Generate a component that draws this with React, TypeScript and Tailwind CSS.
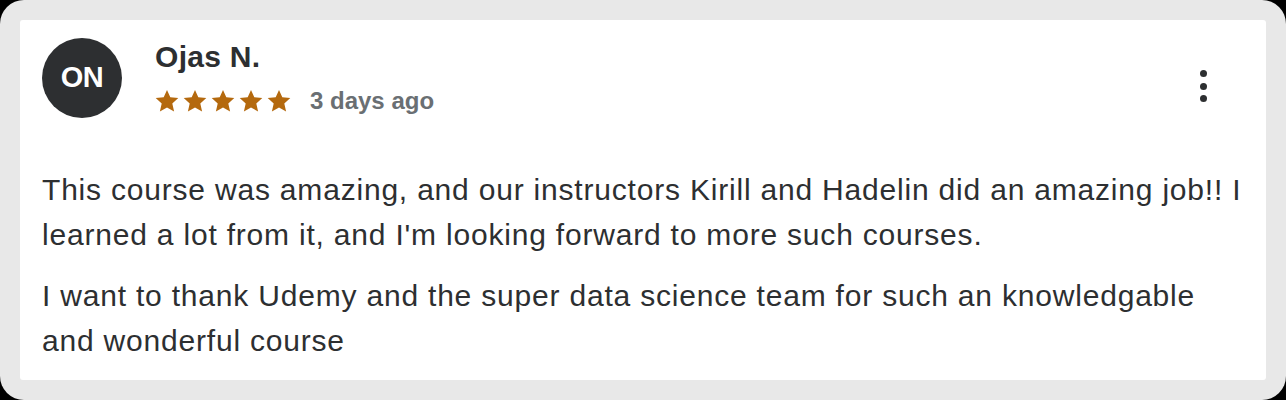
function Star() {
  return (
    <svg className="w-6 h-6" viewBox="0 0 24 24" fill="#b4690e">
      <path d="M12 1l3.3 7.3 8 .8-6 5.4 1.8 8L12 18.4 4.9 22.5l1.8-8-6-5.4 8-.8z" />
    </svg>
  );
}

export default function App() {
  return (
    <div className="bg-black w-[1286px] h-[400px]" style={{ fontFamily: '"Liberation Sans", Arial, sans-serif' }}>
      <div className="h-full rounded-[24px] bg-[#e8e8e8] p-5">
        <div className="h-full bg-white rounded-[3px] pl-[22px] pr-[10px] pt-[18px] text-[#2d2f31]">
          <div className="flex items-start">
            <div className="w-20 h-20 rounded-full bg-[#2d2f31] flex items-center justify-center text-white font-bold text-[29px] tracking-[-0.5px] shrink-0">
              ON
            </div>
            <div className="ml-[33px] mt-[2px] flex-1">
              <div className="text-[30px] leading-[34px] font-bold tracking-[0.3px]">Ojas N.</div>
              <div className="flex items-center mt-[9px]">
                <div className="flex gap-[4px]">
                  <Star />
                  <Star />
                  <Star />
                  <Star />
                  <Star />
                </div>
                <span className="ml-[19px] text-[24px] font-bold text-[#6a6f73]">3 days ago</span>
              </div>
            </div>
            <button className="mt-[32px] mr-[49px] flex flex-col gap-[5.5px] items-center">
              <span className="w-[7px] h-[7px] rounded-full bg-[#2d2f31]" />
              <span className="w-[7px] h-[7px] rounded-full bg-[#2d2f31]" />
              <span className="w-[7px] h-[7px] rounded-full bg-[#2d2f31]" />
            </button>
          </div>
          <div className="mt-[48px] text-[30px] leading-[45px] tracking-[0.8px]">
            <p>This course was amazing, and our instructors Kirill and Hadelin did an amazing job!! I learned a lot from it, and I'm looking forward to more such courses.</p>
            <p className="mt-4">I want to thank Udemy and the super data science team for such an knowledgable and wonderful course</p>
          </div>
        </div>
      </div>
    </div>
  );
}
